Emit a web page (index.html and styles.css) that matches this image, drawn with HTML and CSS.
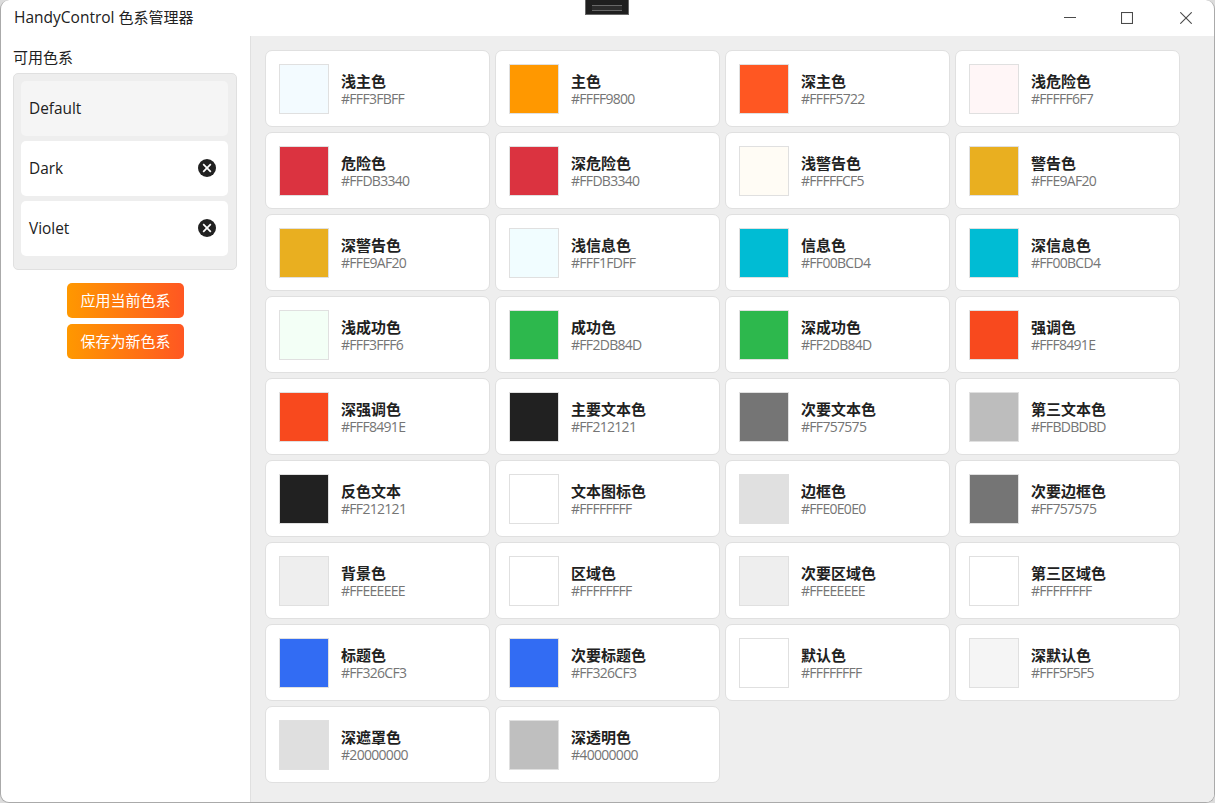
FILE: index.html
```
<!DOCTYPE html>
<html lang="zh-CN">
<head>
    <meta charset="UTF-8">
    <meta name="viewport" content="width=device-width, initial-scale=1.0">
    <title>HandyControl 色系管理器</title>
    <link rel="stylesheet" href="styles.css">
</head>
<body>
    <div class="window">
        <div class="debug-bar"></div>
        <header class="titlebar">
            <h1><span class="brand">HandyControl</span> 色系管理器</h1>
            <div class="window-buttons">
                <svg width="12" height="12" viewBox="0 0 12 12"><path d="M0 5.5h12"/></svg>
                <svg width="12" height="12" viewBox="0 0 12 12"><rect x="0.5" y="0.5" width="11" height="11"/></svg>
                <svg width="12" height="12" viewBox="0 0 12 12"><path d="M0.3 0.3l11.4 11.4M11.7 0.3L0.3 11.7"/></svg>
            </div>
        </header>
        <div class="content">
            <aside class="sidebar">
                <h2>可用色系</h2>
                <ul class="themes">
                    <li class="selected"><span>Default</span></li>
                    <li><span>Dark</span>
                        <svg width="18" height="18" viewBox="0 0 18 18"><circle cx="9" cy="9" r="9"/><path d="M5.2 5.2l7.6 7.6M12.8 5.2l-7.6 7.6"/></svg>
                    </li>
                    <li><span>Violet</span>
                        <svg width="18" height="18" viewBox="0 0 18 18"><circle cx="9" cy="9" r="9"/><path d="M5.2 5.2l7.6 7.6M12.8 5.2l-7.6 7.6"/></svg>
                    </li>
                </ul>
                <button class="btn">应用当前色系</button>
                <button class="btn">保存为新色系</button>
            </aside>
            <main class="colors" id="colors"></main>
        </div>
    </div>
    <script src="script.js"></script>
</body>
</html>
```
FILE: styles.css
```
* {
    margin: 0;
    padding: 0;
    box-sizing: border-box;
}

body {
    font-family: "Open Sans", "Noto Sans CJK SC", sans-serif;
    font-size: 15px;
    background: #dcdcdc;
    color: #212121;
    height: 100vh;
    overflow: hidden;
}

.window {
    position: relative;
    display: flex;
    flex-direction: column;
    width: 1215px;
    height: 803px;
    border: 1px solid #aaa;
    border-top: none;
    border-radius: 9px;
    background: #fff;
    overflow: hidden;
}

/* small toolbar hanging over the title bar */
.debug-bar {
    position: absolute;
    top: 0;
    left: 584px;
    width: 44px;
    height: 15px;
    border: 1px solid #686868;
    border-top: none;
    background: #1f1f1f;
}

.debug-bar::after {
    content: "";
    display: block;
    width: 30px;
    height: 4px;
    margin: 5px 0 0 6px;
    border-top: 1px solid #686868;
    border-bottom: 1px solid #686868;
    background: #2c2c2c;
}

.titlebar {
    display: flex;
    justify-content: space-between;
    align-items: center;
    height: 36px;
    padding: 0 22px 0 13px;
}

.titlebar h1 {
    font-size: 15px;
    font-weight: 400;
    line-height: 34px;
    padding-bottom: 2px;
}

.brand {
    font-size: 15.5px;
}

.window-buttons {
    display: flex;
    gap: 47px;
}

.window-buttons svg {
    fill: none;
    stroke: #4a4a4a;
    stroke-width: 1.1;
}

.window-buttons svg:nth-child(2) {
    margin-left: -2px;
}

.content {
    display: flex;
    flex: 1;
}

.sidebar {
    display: flex;
    flex-direction: column;
    align-items: center;
    width: 250px;
    padding: 10px 13px 0 12px;
    border-right: 1px solid #e0e0e0;
}

.sidebar h2 {
    align-self: stretch;
    height: 27px;
    font-size: 15px;
    font-weight: 400;
    line-height: 23px;
}

.themes {
    display: flex;
    flex-direction: column;
    gap: 5px;
    width: 224px;
    height: 197px;
    margin-bottom: 13px;
    padding: 7px 8px 7px 7px;
    border: 1px solid #e0e0e0;
    border-radius: 5px;
    background: #eee;
    font-size: 15.4px;
    list-style: none;
}

.themes li {
    display: flex;
    justify-content: space-between;
    align-items: center;
    height: 55px;
    padding: 0 12px 2px 8px;
    border-radius: 5px;
    background: #fff;
}

.themes li.selected {
    background: #f5f5f5;
}

.themes span {
    padding-top: 2px;
}

.themes circle {
    fill: #212121;
}

.themes path {
    stroke: #fff;
    stroke-width: 1.7;
}

.btn {
    width: 117px;
    height: 35px;
    margin-bottom: 6px;
    padding-left: 1px;
    border: none;
    border-radius: 5px;
    background: linear-gradient(to right, #ff9800, #ff5722);
    color: #fff;
    font-family: inherit;
    font-size: 15px;
    line-height: 35px;
}

.colors {
    display: grid;
    grid-template-columns: repeat(4, 225px);
    grid-auto-rows: 77px;
    gap: 5px;
    align-content: start;
    flex: 1;
    padding: 14px;
    background: #eee;
}

.card {
    display: flex;
    align-items: center;
    padding-left: 13px;
    border: 1px solid #e0e0e0;
    border-radius: 7px;
    background: #fff;
}

.swatch {
    width: 50px;
    height: 50px;
    margin-right: 12px;
    border: 1px solid #e0e0e0;
    background-clip: padding-box;
}

.info {
    padding-top: 2px;
}

.name {
    font-size: 15px;
    font-weight: 700;
    line-height: 19px;
}

.hex {
    padding-bottom: 2px;
    color: #757575;
    font-size: 14px;
    letter-spacing: -0.7px;
    line-height: 15px;
}
```
FILE: script.js
```
const colors = [
    ['浅主色', '#FFF3FBFF'], ['主色', '#FFFF9800'], ['深主色', '#FFFF5722'], ['浅危险色', '#FFFFF6F7'],
    ['危险色', '#FFDB3340'], ['深危险色', '#FFDB3340'], ['浅警告色', '#FFFFFCF5'], ['警告色', '#FFE9AF20'],
    ['深警告色', '#FFE9AF20'], ['浅信息色', '#FFF1FDFF'], ['信息色', '#FF00BCD4'], ['深信息色', '#FF00BCD4'],
    ['浅成功色', '#FFF3FFF6'], ['成功色', '#FF2DB84D'], ['深成功色', '#FF2DB84D'], ['强调色', '#FFF8491E'],
    ['深强调色', '#FFF8491E'], ['主要文本色', '#FF212121'], ['次要文本色', '#FF757575'], ['第三文本色', '#FFBDBDBD'],
    ['反色文本', '#FF212121'], ['文本图标色', '#FFFFFFFF'], ['边框色', '#FFE0E0E0'], ['次要边框色', '#FF757575'],
    ['背景色', '#FFEEEEEE'], ['区域色', '#FFFFFFFF'], ['次要区域色', '#FFEEEEEE'], ['第三区域色', '#FFFFFFFF'],
    ['标题色', '#FF326CF3'], ['次要标题色', '#FF326CF3'], ['默认色', '#FFFFFFFF'], ['深默认色', '#FFF5F5F5'],
    ['深遮罩色', '#20000000'], ['深透明色', '#40000000']
];

// values are #AARRGGBB, css wants #RRGGBBAA
function toCss(argb) {
    return '#' + argb.slice(3) + argb.slice(1, 3);
}

document.getElementById('colors').innerHTML = colors.map(([name, hex]) => `
    <div class="card">
        <div class="swatch" style="background-color: ${toCss(hex)}"></div>
        <div class="info">
            <p class="name">${name}</p>
            <p class="hex">${hex}</p>
        </div>
    </div>`).join('');
```
